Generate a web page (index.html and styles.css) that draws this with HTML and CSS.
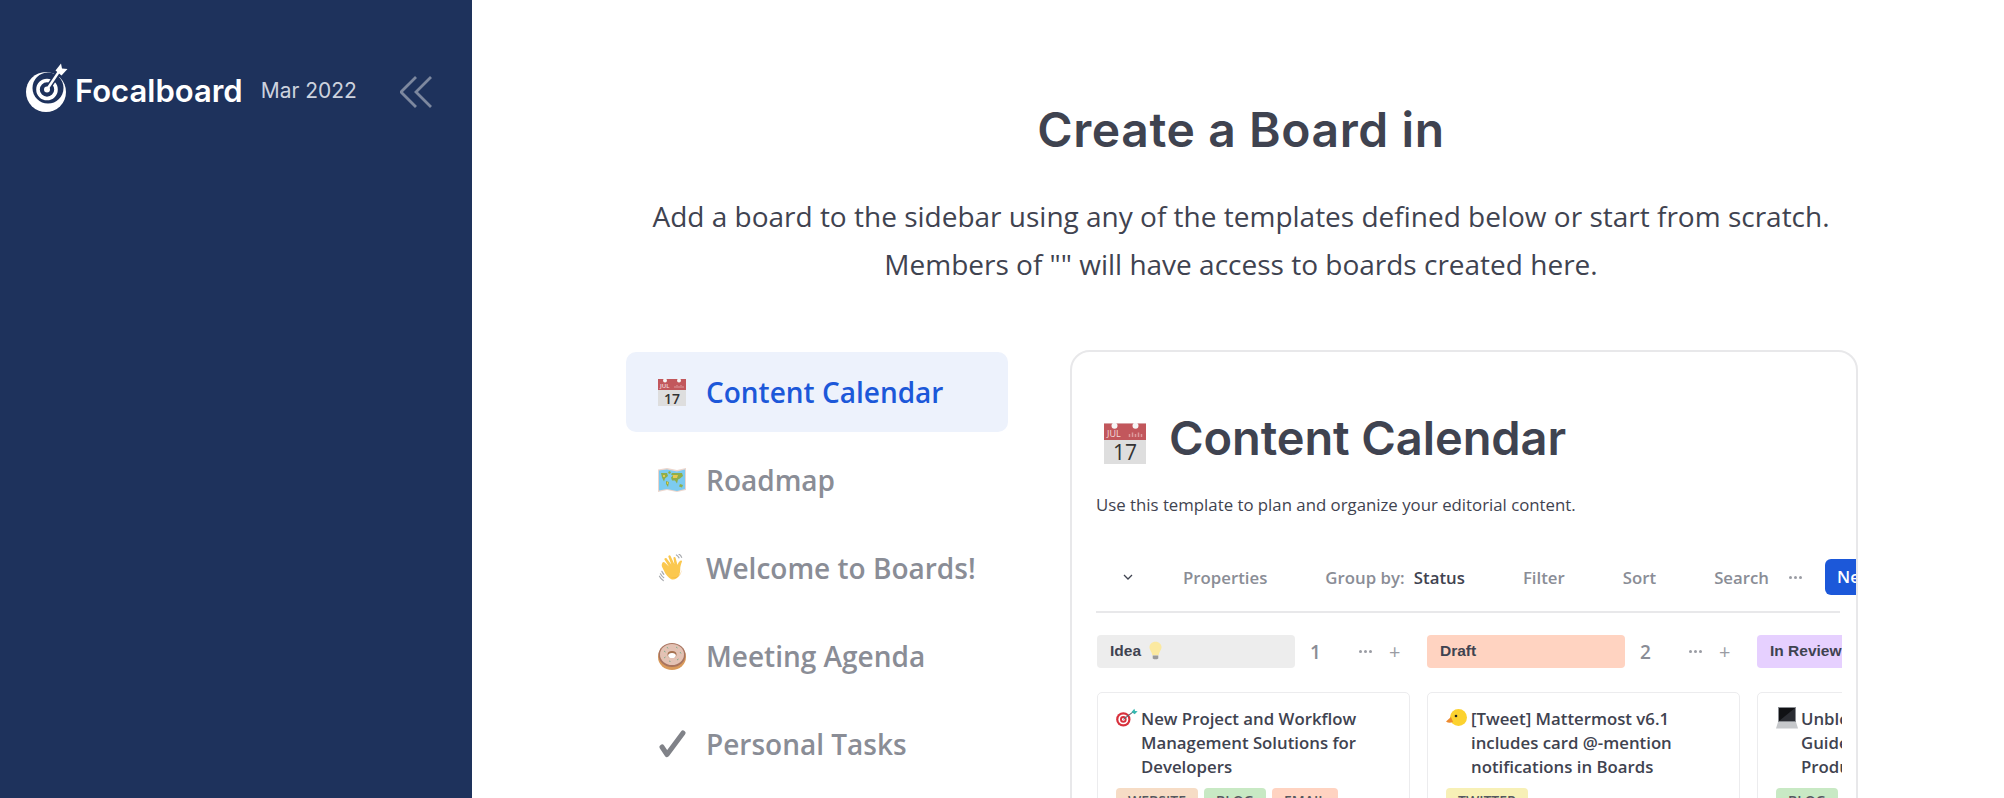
FILE: index.html
```html
<!DOCTYPE html>
<html lang="en">
<head>
	<meta charset="UTF-8">
	<meta name="viewport" content="width=device-width, initial-scale=1.0">
	<title>Focalboard</title>
	<link rel="stylesheet" href="styles.css">
</head>
<body>
	<svg class="sprite" width="0" height="0">
		<defs>
			<symbol id="calendar" viewBox="0 0 28 28">
				<rect y="1" width="28" height="27" fill="#dedede"/>
				<rect y="1" width="28" height="11" fill="#c2575c"/>
				<circle cx="7" cy="2.5" r="2" fill="#f6f6f6"/>
				<circle cx="21" cy="2.5" r="2" fill="#f6f6f6"/>
				<path d="M17 10V8M19 10V7M21 10V8M23 10V7M25 10V8" stroke="#dc9a9c" stroke-width="1"/>
				<text x="2" y="10" class="cal-month">JUL</text>
				<text x="14" y="25.5" class="cal-day">17</text>
			</symbol>
			<symbol id="map" viewBox="0 0 28 28">
				<path d="M0 3.500 9 2l10 2 9-2v22l-9 2-10-2-9 2z" fill="#ecd5cc"/>
				<path d="M1 4.500 9 3.500l10 2 8-2v19.500l-8 2-10-2-8 1.500z" fill="#7ccbf0"/>
				<path d="M3 7h6l1 3-3 2.500-1 3-2-4zM10 6l2-1 1 2-2 1zM14 7h10l1 3-3 2.500-2 1-1 4-2-3-3 0-1-3 2-2-2-1zM8 15l3 1-1 5-2-3zM22 18l3 1-1 2.500-3-1z" fill="#8fae4a"/>
				<path d="M15 9h5l-1 3h-4zM5 9h2v2H5zM9 16h1v2H9z" fill="#e9c84f"/>
			</symbol>
			<symbol id="wave" viewBox="1 0 26 29">
				<path d="M2 20.500c1 2 2 3 3.500 4M1 23c1 2 2 3 4 4.500M3.500 18c.5 1 1 2 2 3" stroke="#a9abaf" stroke-width="1.200" fill="none" stroke-linecap="round"/>
				<path d="M18.500 1c1 .5 2 1.500 2.800 3M21 0c1.200.6 2.400 2 3 3.500" stroke="#a9abaf" stroke-width="1.200" fill="none" stroke-linecap="round"/>
				<path d="M4 9c.8-1 2-.6 2.800 0l4 4-4.500-7c-.7-1.100 1-2.600 2-1.500l5 6.500-3-8c-.5-1.200 1.400-2.300 2.200-1l4 8.500-1-6c-.2-1.300 1.700-2 2.200-.6l2 7.500c.5-2 1.500-3.500 3-4.500 1-.6 2 .2 1.600 1.200-1 2.400-1.800 5-1.800 8 0 5-2 10-7.500 10.400C13 26.800 9.500 24 7 20L4 14c-.6-1-.8-2-.6-3z" fill="#fbc84f"/>
				<path d="M11 23c3 2.500 7 2.500 10 0 2-1.500 3-5 3-7-.5 4-3 8-7 8.500-2.500.3-4.500-.3-6-1.500z" fill="#f0a42c"/>
			</symbol>
			<symbol id="donut" viewBox="0 0 28 28">
				<ellipse cx="14" cy="15" rx="14" ry="13" fill="#d99a5b"/>
				<ellipse cx="14" cy="13" rx="13.500" ry="12" fill="#a8745f"/>
				<ellipse cx="14" cy="12.500" rx="12" ry="10.500" fill="#e3c2b4"/>
				<ellipse cx="14" cy="12.500" rx="4.500" ry="3.500" fill="#a5714f"/>
				<ellipse cx="14" cy="13.500" rx="3.800" ry="2.600" fill="#fff"/>
				<path d="M6 9l1.500 1M9 5l1 1.500M18 5l1.500 1M22 10l1 1.500M6 16l1.500-1M11 19l1.500.5M19 18l1.500-1" stroke="#7fb08e" stroke-width="1"/>
			</symbol>
			<symbol id="bulb" viewBox="0 0 14 20">
				<path d="M7 .5C3 .5.5 3.300.5 6.600c0 3 2.500 4.400 3 8.400h7c.5-4 3-5.400 3-8.400C13.500 3.300 11 .5 7 .5z" fill="#fbe9a0"/>
				<path d="M4 15.500h6v3l-1.500 1h-3L4 18.500z" fill="#9a9a9a"/>
			</symbol>
			<symbol id="target" viewBox="0 0 24 20">
				<circle cx="8" cy="11.500" r="7.800" fill="#d8303c"/>
				<circle cx="8" cy="11.500" r="5.400" fill="#fff"/>
				<circle cx="8" cy="11.500" r="3.600" fill="#d8303c"/>
				<circle cx="8" cy="11.500" r="1.500" fill="#fff"/>
				<path d="M8 11.500 19 3" stroke="#5b6772" stroke-width="1.200"/>
				<path d="M17 3.500 20 0l.8 2.400 2.800.2-3.200 3.200z" fill="#35b8b0"/>
			</symbol>
			<symbol id="duck" viewBox="0 0 22 18">
				<circle cx="12.500" cy="8.500" r="8.500" fill="#fcd22f"/>
				<path d="M5 8 0 12.500c2 1.500 4.500 1.500 7 .5z" fill="#ee8a2e"/>
				<circle cx="10" cy="7" r="1.300" fill="#222"/>
			</symbol>
			<symbol id="laptop" viewBox="0 0 22 22">
				<path d="M2 0h18v15H2z" fill="#8a8d92"/>
				<path d="M3 1h16v13H3z" fill="#101114"/>
				<path d="M3 14 19 1v13z" fill="#2b2d33"/>
				<path d="M2 15h18l2 6.500H0z" fill="#c6c8cb"/>
			</symbol>
		</defs>
	</svg>

	<aside class="sidebar">
		<svg class="logo" viewBox="0 0 44 52" width="44" height="52">
			<circle cx="21" cy="30" r="20" fill="#fff"/>
			<circle cx="23" cy="26" r="15.500" fill="#1e325c"/>
			<circle cx="22" cy="27.500" r="9" fill="none" stroke="#fff" stroke-width="3.600"/>
			<path d="M22 27.500 35 8" stroke="#1e325c" stroke-width="5.500"/>
			<circle cx="22" cy="27.500" r="3" fill="#fff"/>
			<path d="M22 27.500 34 9.500" stroke="#fff" stroke-width="2.400"/>
			<path d="M30.500 8.500 36 1.500l1 5 5.500.5-6 6.500z" fill="#fff"/>
		</svg>
		<span class="brand">Focalboard</span>
		<span class="version">Mar 2022</span>
		<svg class="collapse" viewBox="0 0 32 32" width="32" height="32">
			<path d="M16 1 1 16l15 15M31 1 16 16l15 15" fill="none" stroke="#7d889f" stroke-width="2.800"/>
		</svg>
	</aside>

	<main class="main">
		<header class="header">
			<h1 class="header__title">Create a Board in</h1>
			<p class="header__text">Add a board to the sidebar using any of the templates defined below or start from scratch.<br>Members of "" will have access to boards created here.</p>
		</header>

		<div class="content">
			<ul class="templates">
				<li class="templates__item templates__item--active"><svg class="templates__icon"><use href="#calendar"/></svg>Content Calendar</li>
				<li class="templates__item"><svg class="templates__icon"><use href="#map"/></svg>Roadmap</li>
				<li class="templates__item"><svg class="templates__icon"><use href="#wave"/></svg>Welcome to Boards!</li>
				<li class="templates__item"><svg class="templates__icon"><use href="#donut"/></svg>Meeting Agenda</li>
				<li class="templates__item"><svg class="templates__icon" viewBox="0 0 28 28"><path d="M4 17l5 7.500L25 3" fill="none" stroke="#808288" stroke-width="5" stroke-linecap="round" stroke-linejoin="round"/></svg>Personal Tasks</li>
			</ul>

			<section class="preview">
				<div class="preview__head">
					<svg class="preview__icon"><use href="#calendar"/></svg>
					<h2 class="preview__title">Content Calendar</h2>
				</div>
				<p class="preview__text">Use this template to plan and organize your editorial content.</p>

				<div class="toolbar">
					<svg class="toolbar__chevron" viewBox="0 0 10 6" width="10" height="6"><path d="M1 1l4 4 4-4" fill="none" stroke="#3f4350" stroke-width="1.300"/></svg>
					<div class="toolbar__actions">
						<span>Properties</span>
						<span>Group by: <b class="toolbar__value">Status</b></span>
						<span>Filter</span>
						<span>Sort</span>
						<span>Search</span>
					</div>
					<span class="dots toolbar__dots"><i></i><i></i><i></i></span>
					<span class="toolbar__new">New</span>
				</div>
				<div class="divider"></div>

				<div class="board">
					<div class="column">
						<div class="column__head">
							<span class="column__label column__label--idea">Idea <svg class="column__bulb"><use href="#bulb"/></svg></span>
							<span class="column__count">1</span>
							<span class="dots"><i></i><i></i><i></i></span>
							<span class="column__plus">+</span>
						</div>
						<article class="card">
							<div class="card__title"><svg class="card__icon"><use href="#target"/></svg><span>New Project and Workflow Management Solutions for Developers</span></div>
							<div class="card__tags">
								<span class="tag tag--website">WEBSITE</span>
								<span class="tag tag--blog">BLOG</span>
								<span class="tag tag--email">EMAIL</span>
							</div>
						</article>
					</div>

					<div class="column">
						<div class="column__head">
							<span class="column__label column__label--draft">Draft</span>
							<span class="column__count">2</span>
							<span class="dots"><i></i><i></i><i></i></span>
							<span class="column__plus">+</span>
						</div>
						<article class="card">
							<div class="card__title"><svg class="card__icon"><use href="#duck"/></svg><span>[Tweet] Mattermost v6.1 includes card @-mention notifications in Boards</span></div>
							<div class="card__tags">
								<span class="tag tag--twitter">TWITTER</span>
							</div>
						</article>
					</div>

					<div class="column">
						<div class="column__head">
							<span class="column__label column__label--review">In Review</span>
						</div>
						<article class="card">
							<div class="card__title"><svg class="card__icon"><use href="#laptop"/></svg><span>Unblocking Workflows:<br>Guide for Teams and<br>Product Managers</span></div>
							<div class="card__tags">
								<span class="tag tag--blog">BLOG</span>
							</div>
						</article>
					</div>
				</div>
			</section>
		</div>
	</main>
</body>
</html>
```

FILE: styles.css
```css
*, *::after, *::before {
	box-sizing: border-box;
}

:root {
	--navy: #1e325c;
	--ink: #3f4350;
	--muted: #8a8d96;
	--blue: #1c58d9;
	--line: #e8e8ea;
}

body {
	display: flex;
	height: 798px;
	margin: 0;
	overflow: hidden;
	font-family: "Open Sans", sans-serif;
	color: var(--ink);
	background-color: #fff;
}

.sprite {
	position: absolute;
}

.cal-month {
	font-family: "Open Sans", sans-serif;
	font-size: 6px;
	fill: #f3dcdc;
}

.cal-day {
	font-family: "Open Sans", sans-serif;
	font-size: 14px;
	text-anchor: middle;
	fill: #333;
}

.sidebar {
	display: flex;
	flex: 0 0 472px;
	align-items: flex-start;
	padding: 62px 0 0 25px;
	background-color: var(--navy);
}

.logo {
	flex: none;
}

.brand {
	margin: 10px 0 0 6px;
	font-family: Inter, sans-serif;
	font-size: 31px;
	font-weight: 600;
	line-height: 38px;
	color: #fff;
}

.version {
	margin: 14px 0 0 18px;
	font-family: Inter, sans-serif;
	font-size: 21px;
	line-height: 30px;
	color: #cdd2de;
}

.collapse {
	margin: 14px 0 0 43px;
}

.main {
	flex: 1;
	min-width: 0;
}

.header {
	padding: 100px 0 0 6px;
	text-align: center;
}

.header__title {
	margin: 0;
	font-family: Inter, sans-serif;
	font-size: 48px;
	font-weight: 600;
	line-height: 60px;
	letter-spacing: 0.6px;
}

.header__text {
	margin: 32px 0 0;
	font-size: 28px;
	line-height: 48px;
}

.content {
	display: flex;
	align-items: flex-start;
	gap: 62px;
	margin: 62px 0 0 154px;
}

.templates {
	flex: 0 0 382px;
	margin: 2px 0 0;
	padding: 0;
	list-style: none;
}

.templates__item {
	display: flex;
	align-items: center;
	gap: 20px;
	height: 80px;
	margin-bottom: 8px;
	padding-left: 32px;
	border-radius: 10px;
	font-size: 28px;
	font-weight: 600;
	color: var(--muted);
}

.templates__item--active {
	color: var(--blue);
	background-color: #edf2fc;
}

.templates__icon {
	flex: none;
	width: 28px;
	height: 28px;
}

.preview {
	flex: 0 0 788px;
	height: 500px;
	padding: 56px 0 0 24px;
	border: 2px solid var(--line);
	border-radius: 20px;
	overflow: hidden;
}

.preview__head {
	display: flex;
	align-items: center;
	gap: 23px;
	padding-left: 7px;
}

.preview__icon {
	flex: none;
	width: 42px;
	height: 44px;
	margin: 10px 0 0 1px;
}

.preview__title {
	margin: 0;
	font-family: Inter, sans-serif;
	font-size: 47px;
	font-weight: 600;
	line-height: 60px;
	letter-spacing: -0.1px;
}

.preview__text {
	margin: 25px 0 0;
	font-size: 16.8px;
	line-height: 24px;
}

.toolbar {
	display: flex;
	align-items: center;
	height: 36px;
	margin-top: 42px;
	padding-left: 27px;
	font-size: 16.8px;
	font-weight: 600;
	color: var(--muted);
	white-space: nowrap;
}

.toolbar__chevron {
	flex: none;
	margin-right: 50px;
}

.toolbar__actions {
	display: flex;
	gap: 58px;
}

.toolbar__value {
	margin-left: 5px;
	font-weight: 600;
	color: var(--ink);
}

.toolbar__dots {
	margin-left: 20px;
}

.toolbar__new {
	width: 34px;
	height: 36px;
	margin-left: 23px;
	padding-left: 12px;
	border-radius: 6px 0 0 6px;
	line-height: 36px;
	color: #fff;
	background-color: var(--blue);
	overflow: hidden;
}

.divider {
	width: 744px;
	height: 2px;
	margin-top: 16px;
	background-color: var(--line);
}

.dots {
	display: inline-flex;
	flex: none;
	gap: 2px;
}

.dots i {
	width: 3px;
	height: 3px;
	border-radius: 50%;
	background-color: #9a9ca3;
}

.board {
	display: flex;
	gap: 17px;
	width: 745px;
	margin: 22px 0 0 1px;
	overflow: hidden;
}

.column {
	flex: 0 0 313px;
}

.column__head {
	display: flex;
	align-items: center;
	height: 33px;
	margin-bottom: 24px;
}

.column__label {
	display: flex;
	align-items: center;
	gap: 8px;
	flex: 0 0 198px;
	height: 33px;
	padding: 0 0 2px 13px;
	border-radius: 4px;
	font-family: "Liberation Sans", Arial, sans-serif;
	font-size: 15.5px;
	font-weight: 700;
	white-space: nowrap;
}

.column__label--idea {
	background-color: #ededed;
}

.column__label--draft {
	background-color: #ffd3c1;
}

.column__label--review {
	background-color: #e6d0ff;
}

.column__bulb {
	width: 13px;
	height: 19px;
}

.column__count {
	width: 64px;
	padding-left: 15px;
	font-size: 19px;
	font-weight: 600;
	color: var(--muted);
}

.column__plus {
	margin-left: 17px;
	font-size: 20px;
	line-height: 20px;
	color: #9a9ca3;
}

.card {
	height: 200px;
	padding: 14px 14px 0 18px;
	border: 1.500px solid #ececee;
	border-radius: 5px;
}

.card__title {
	display: flex;
	font-size: 16.8px;
	font-weight: 600;
	line-height: 24px;
}

.card__icon {
	flex: none;
	width: 22px;
	height: 22px;
	margin-right: 3px;
}

.card__tags {
	display: flex;
	gap: 6px;
	margin-top: 9px;
}

.tag {
	padding: 3px 12px 7px;
	border-radius: 4px;
	font-size: 14px;
	font-weight: 600;
	line-height: 20px;
	color: #55585f;
}

.tag--website {
	background-color: #f6dcc5;
}

.tag--blog {
	background-color: #c8e9c4;
}

.tag--email {
	background-color: #ffd3c1;
}

.tag--twitter {
	background-color: #f7f0b6;
}
```
